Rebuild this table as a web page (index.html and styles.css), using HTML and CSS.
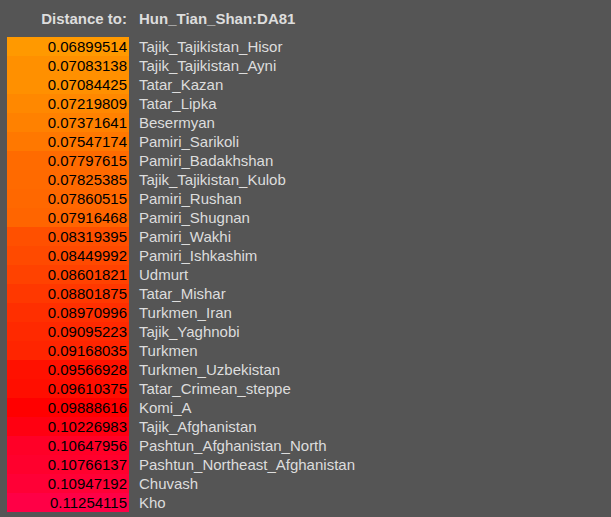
FILE: index.html
```html
<!DOCTYPE html>
<html>
<head>
<meta charset="utf-8">
<link rel="stylesheet" href="styles.css">
</head>
<body>
<div class="dist">
  <div class="row head"><div class="val">Distance to:</div><div class="name">Hun_Tian_Shan:DA81</div></div>
  <div class="rows" id="rows"></div>
</div>
<script src="script.js"></script>
</body>
</html>
```
FILE: styles.css
```css
html, body {
  margin: 0;
  padding: 0;
  background: #555555;
}
body {
  font-family: "Liberation Sans", Arial, sans-serif;
  font-size: 15px;
  color: #dddddd;
}
.dist {
  padding: 9px 0 0 7px;
}
.row {
  display: flex;
  height: 19px;
  line-height: 19px;
  white-space: nowrap;
}
.head {
  font-weight: bold;
  margin-bottom: 9px;
}
.val {
  width: 122px;
  box-sizing: border-box;
  padding-right: 2px;
  text-align: right;
}
.rows .val {
  color: #000000;
}
.name {
  padding-left: 10px;
}
```
FILE: script.js
```js
var data = [
["0.06899514","Tajik_Tajikistan_Hisor"],
["0.07083138","Tajik_Tajikistan_Ayni"],
["0.07084425","Tatar_Kazan"],
["0.07219809","Tatar_Lipka"],
["0.07371641","Besermyan"],
["0.07547174","Pamiri_Sarikoli"],
["0.07797615","Pamiri_Badakhshan"],
["0.07825385","Tajik_Tajikistan_Kulob"],
["0.07860515","Pamiri_Rushan"],
["0.07916468","Pamiri_Shugnan"],
["0.08319395","Pamiri_Wakhi"],
["0.08449992","Pamiri_Ishkashim"],
["0.08601821","Udmurt"],
["0.08801875","Tatar_Mishar"],
["0.08970996","Turkmen_Iran"],
["0.09095223","Tajik_Yaghnobi"],
["0.09168035","Turkmen"],
["0.09566928","Turkmen_Uzbekistan"],
["0.09610375","Tatar_Crimean_steppe"],
["0.09888616","Komi_A"],
["0.10226983","Tajik_Afghanistan"],
["0.10647956","Pashtun_Afghanistan_North"],
["0.10766137","Pashtun_Northeast_Afghanistan"],
["0.10947192","Chuvash"],
["0.11254115","Kho"]
];
var rows = document.getElementById("rows");
data.forEach(function (d) {
  var v = parseFloat(d[0]);
  var hue = 36 - (v - 0.069) * 1204;
  if (hue < 0) hue += 360;
  var r = document.createElement("div");
  r.className = "row";
  var a = document.createElement("div");
  a.className = "val";
  a.style.background = "hsl(" + hue.toFixed(1) + ",100%,50%)";
  a.textContent = d[0];
  var b = document.createElement("div");
  b.className = "name";
  b.textContent = d[1];
  r.appendChild(a);
  r.appendChild(b);
  rows.appendChild(r);
});
```
